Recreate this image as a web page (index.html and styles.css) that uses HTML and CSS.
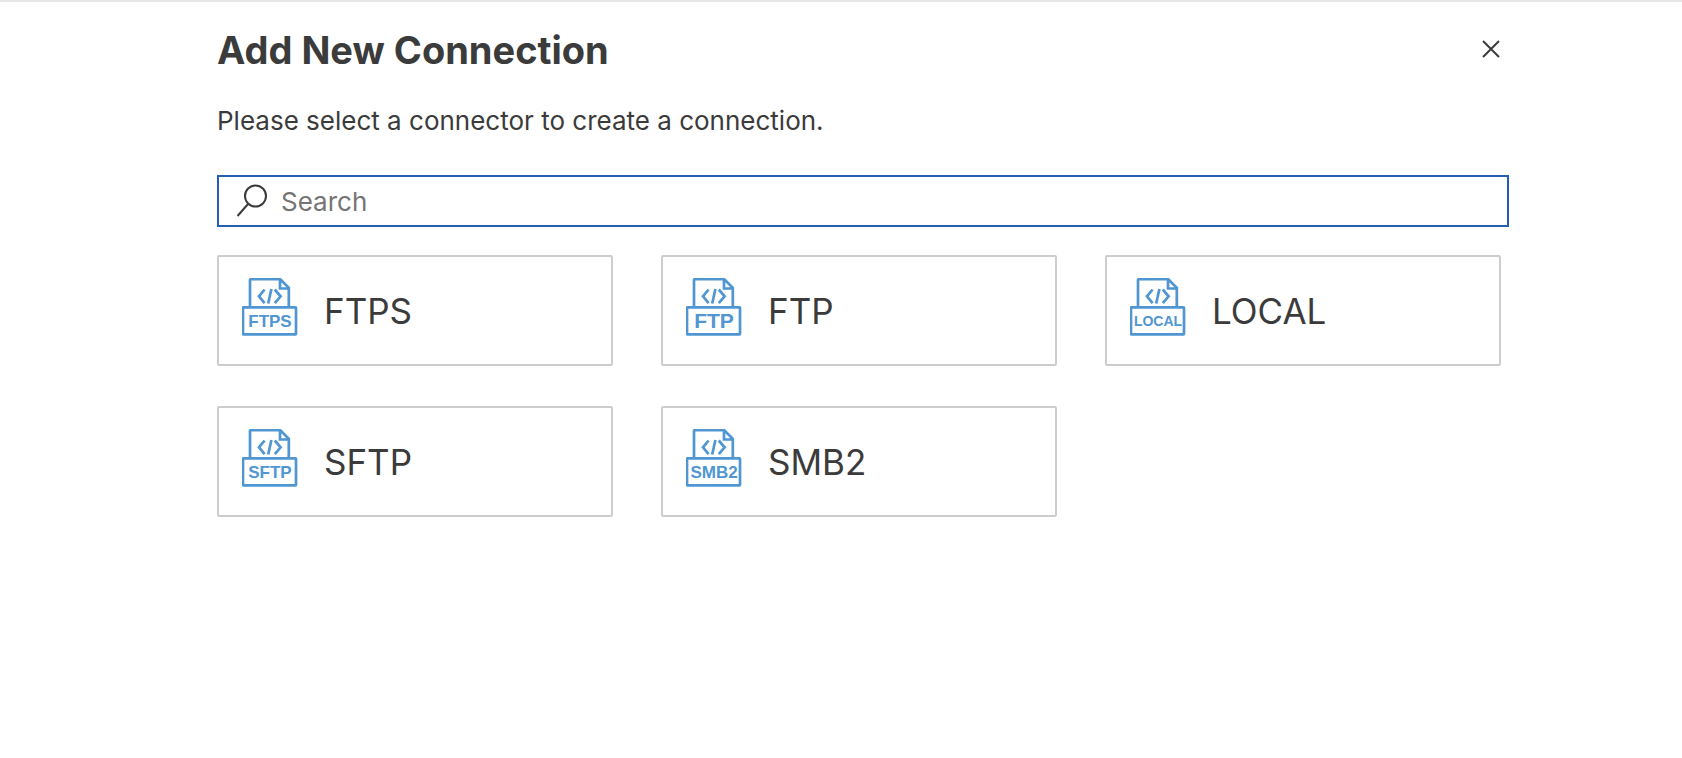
FILE: index.html
```html
<!DOCTYPE html>
<html lang="en">
<head>
<meta charset="utf-8">
<title>Add New Connection</title>
<link rel="stylesheet" href="styles.css">
</head>
<body>
<svg class="sprite" aria-hidden="true">
  <symbol id="file" viewBox="0 0 56 64">
    <path d="M8 28.5V2Q8 1.2 8.8 1.2H38.2L46.8 9.8V28.5M38 1.2V10.5H46.8"/>
    <path d="M22.6 11.5L17 18.3L22.6 25.2M29.4 11L26.2 25.5M32.8 11.5L38.6 18.3L32.8 25.2"/>
    <rect x="1" y="29.3" width="53" height="27" rx="0.5"/>
  </symbol>
</svg>
<main class="panel">
  <header class="header">
    <h1 class="title">Add New Connection</h1>
    <button class="close" type="button" aria-label="Close">
      <svg viewBox="0 0 20 20"><path d="M2 1L18 17M18 1L2 17"/></svg>
    </button>
  </header>
  <p class="intro">Please select a connector to create a connection.</p>
  <label class="search">
    <svg class="search-icon" viewBox="0 0 32 34" aria-hidden="true"><circle cx="19.5" cy="12" r="10.5"/><path d="M12.5 19.5L1.5 32"/></svg>
    <input class="search-input" type="text" placeholder="Search" aria-label="Search">
  </label>
  <div class="cards">
    <button class="card" type="button">
      <svg class="icon" viewBox="0 0 56 64" aria-hidden="true"><use href="#file"/><text class="tag" x="28" y="49">FTPS</text></svg>
      <span class="name">FTPS</span>
    </button>
    <button class="card" type="button">
      <svg class="icon" viewBox="0 0 56 64" aria-hidden="true"><use href="#file"/><text class="tag tag-large" x="28" y="50">FTP</text></svg>
      <span class="name">FTP</span>
    </button>
    <button class="card" type="button">
      <svg class="icon" viewBox="0 0 56 64" aria-hidden="true"><use href="#file"/><text class="tag tag-small" x="28" y="48">LOCAL</text></svg>
      <span class="name">LOCAL</span>
    </button>
    <button class="card" type="button">
      <svg class="icon" viewBox="0 0 56 64" aria-hidden="true"><use href="#file"/><text class="tag" x="28" y="49">SFTP</text></svg>
      <span class="name">SFTP</span>
    </button>
    <button class="card" type="button">
      <svg class="icon" viewBox="0 0 56 64" aria-hidden="true"><use href="#file"/><text class="tag" x="28" y="49">SMB2</text></svg>
      <span class="name">SMB2</span>
    </button>
  </div>
</main>
</body>
</html>
```

FILE: styles.css
```css
* { box-sizing: border-box; }

body {
  margin: 0;
  border-top: 2px solid #e5e5e5;
  background: #fff;
  color: #3b3b3b;
  font-family: Inter, "Liberation Sans", sans-serif;
}

.sprite { display: none; }

.panel { padding: 24px 173px 40px 217px; }

.header {
  display: flex;
  align-items: center;
  justify-content: space-between;
  padding-right: 8px;
}

.title {
  margin: 0;
  font-size: 38px;
  line-height: 48px;
  font-weight: 700;
}

.close {
  display: flex;
  padding: 0;
  border: 0;
  background: none;
}

.close svg {
  width: 20px;
  height: 20px;
  fill: none;
  stroke: #3b3b3b;
  stroke-width: 2;
}

.intro {
  margin: 31px 0 0;
  font-size: 26px;
  line-height: 32px;
}

.search {
  display: flex;
  align-items: center;
  gap: 13px;
  height: 52px;
  margin-top: 38px;
  padding: 0 17px;
  border: 2px solid #255eb5;
}

.search-icon {
  flex: none;
  width: 32px;
  height: 34px;
  fill: none;
  stroke: #3b3b3b;
  stroke-width: 2;
}

.search-input {
  flex: 1;
  min-width: 0;
  padding: 2px 0 0;
  border: 0;
  outline: 0;
  background: none;
  color: inherit;
  font: 26px/32px Inter, "Liberation Sans", sans-serif;
}

.search-input::placeholder { color: #757575; }

.cards {
  display: grid;
  grid-template-columns: repeat(3, 1fr);
  gap: 40px 48px;
  margin-top: 28px;
  padding-right: 8px;
}

.card {
  display: flex;
  align-items: center;
  gap: 26px;
  min-width: 0;
  padding: 21px 23px 22px;
  border: 2px solid #cdcdcd;
  border-radius: 2px;
  background: #fff;
  color: inherit;
  font-family: inherit;
  text-align: left;
}

.icon {
  flex: none;
  width: 56px;
  height: 64px;
  fill: none;
  stroke: #4f96d2;
  stroke-width: 2.7;
}

.tag {
  fill: #4f96d2;
  stroke: none;
  font-family: "Liberation Sans", Arial, sans-serif;
  font-size: 17px;
  font-weight: 700;
  text-anchor: middle;
}

.tag-large { font-size: 21px; }

.tag-small { font-size: 14px; }

.name {
  padding-top: 2px;
  font-size: 35px;
  line-height: 44px;
}
```
